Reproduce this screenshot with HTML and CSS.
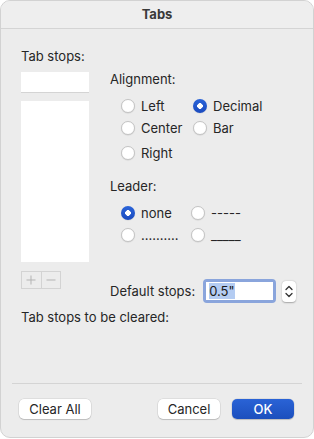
FILE: index.html
```html
<!DOCTYPE html>
<html lang="en">
  <head>
    <meta charset="UTF-8" />
    <meta name="viewport" content="width=device-width, initial-scale=1.0" />
    <title>Tabs</title>
    <link rel="stylesheet" href="styles.css">
  </head>
  <body>
    <div class="window">
      <div class="titlebar">Tabs</div>
      <div class="content">
        <div class="main">
          <div class="stops-col">
            <div class="label">Tab stops:</div>
            <div class="stop-input"></div>
            <div class="stop-list"></div>
            <div class="plus-minus">
              <span class="pm">
                <svg width="10" height="10" viewBox="0 0 10 10"><path d="M5 0.5 V9.5 M0.5 5 H9.5" stroke="#b3b3b3" stroke-width="1"/></svg>
              </span>
              <span class="pm">
                <svg width="10" height="10" viewBox="0 0 10 10"><path d="M0.5 5 H9.5" stroke="#b3b3b3" stroke-width="1"/></svg>
              </span>
            </div>
          </div>
          <div class="options-col">
            <div class="label">Alignment:</div>
            <div class="radio-grid align-grid">
              <div class="radio r1"><span class="dot"></span>Left</div>
              <div class="radio r1"><span class="dot on"></span>Decimal</div>
              <div class="radio r2"><span class="dot"></span>Center</div>
              <div class="radio r2"><span class="dot"></span>Bar</div>
              <div class="radio r3"><span class="dot"></span>Right</div>
            </div>
            <div class="label leader-label">Leader:</div>
            <div class="radio-grid leader-grid">
              <div class="radio"><span class="dot on"></span>none</div>
              <div class="radio"><span class="dot"></span>-----</div>
              <div class="radio r2"><span class="dot"></span>..........</div>
              <div class="radio r2"><span class="dot"></span>_____</div>
            </div>
            <div class="default-row">
              <span class="label">Default stops:</span>
              <div class="focus-ring">
                <div class="num-input"><span class="sel">0.5"</span></div>
              </div>
              <div class="stepper">
                <svg width="14" height="21" viewBox="0 0 14 21">
                  <path d="M4 8.5 L7 5.5 L10 8.5" fill="none" stroke="#333" stroke-width="1.3" stroke-linecap="round" stroke-linejoin="round"/>
                  <path d="M4 12.5 L7 15.5 L10 12.5" fill="none" stroke="#333" stroke-width="1.3" stroke-linecap="round" stroke-linejoin="round"/>
                </svg>
              </div>
            </div>
          </div>
        </div>
        <div class="label cleared">Tab stops to be cleared:</div>
      </div>
      <div class="footer">
        <div class="separator"></div>
        <div class="buttons">
          <button class="btn clear">Clear All</button>
          <div class="spacer"></div>
          <button class="btn cancel">Cancel</button>
          <button class="btn ok">OK</button>
        </div>
      </div>
    </div>
  </body>
</html>
```

FILE: styles.css
```css
body {
  margin: 0;
  padding: 0;
  background: #ffffff;
  font-family: "Inter", "Noto Sans", sans-serif;
  font-size: 13px;
  color: #262626;
}
.window {
  width: 314px;
  height: 438px;
  box-sizing: border-box;
  background: #ececec;
  border: 1px solid #d2d2d2;
  border-radius: 10px;
  display: flex;
  flex-direction: column;
  overflow: hidden;
}
.titlebar {
  height: 27px;
  line-height: 26px;
  text-align: center;
  font-weight: bold;
  color: #3a3a3a;
  background: #eeeeee;
  border-bottom: 1px solid #d4d4d4;
}
.content {
  padding: 19px 0 0 20px;
}
.label {
  line-height: 16px;
}
.main {
  display: flex;
}
.stops-col {
  width: 68px;
  display: flex;
  flex-direction: column;
}
.stop-input {
  margin-top: 8px;
  height: 20px;
  background: #fff;
  box-shadow: 0 0.5px 0.5px rgba(0, 0, 0, 0.1);
}
.stop-list {
  margin-top: 9px;
  height: 161px;
  background: #fff;
}
.plus-minus {
  margin-top: 9px;
  display: flex;
  width: 40px;
  height: 18px;
  border: 1px solid #d3d3d3;
  box-sizing: border-box;
}
.pm {
  flex: 1;
  display: flex;
  align-items: center;
  justify-content: center;
}
.pm + .pm {
  border-left: 1px solid #d3d3d3;
}
.options-col {
  margin-left: 21px;
  margin-top: 23px;
  display: flex;
  flex-direction: column;
}
.radio-grid {
  display: grid;
  padding-left: 11px;
}
.align-grid {
  margin-top: 10px;
  grid-template-columns: 72px auto;
}
.leader-grid {
  margin-top: 10px;
  grid-template-columns: 70px auto;
}
.leader-label {
  margin-top: 16px;
}
.radio {
  display: flex;
  align-items: center;
  height: 18px;
  line-height: 18px;
}
.r2 {
  margin-top: 4px;
}
.r3 {
  margin-top: 7px;
}
.dot {
  width: 14px;
  height: 14px;
  box-sizing: border-box;
  border-radius: 50%;
  background: #fff;
  border: 0.5px solid #c4c4c4;
  box-shadow: 0 0.5px 1px rgba(0, 0, 0, 0.12);
  margin-right: 6px;
  flex-shrink: 0;
}
.dot.on {
  border: none;
  background: radial-gradient(circle, #fff 0 2.6px, transparent 3px),
    linear-gradient(#2a64d9, #1b4bbf);
}
.default-row {
  margin-top: 35px;
  display: flex;
  align-items: center;
}
.focus-ring {
  margin-left: 8px;
  width: 73px;
  height: 24px;
  box-sizing: border-box;
  border: 3px solid #8aa5dc;
  border-radius: 4px;
  padding: 0;
}
.num-input {
  height: 100%;
  background: #fff;
  padding-left: 3px;
  line-height: 18px;
}
.sel {
  background: #b4ccf2;
  color: #1a1a1a;
}
.stepper {
  margin-left: 6px;
  width: 14px;
  height: 21px;
  background: #fff;
  border-radius: 4px;
  box-shadow: 0 0.5px 1.5px rgba(0, 0, 0, 0.3);
}
.stepper svg {
  display: block;
}
.cleared {
  margin-top: 6px;
}
.footer {
  margin-top: auto;
  padding-bottom: 18px;
}
.separator {
  margin: 0 11px;
  height: 1px;
  background: #d4d4d4;
}
.buttons {
  display: flex;
  margin-top: 15px;
  padding: 0 19px 0 18px;
  gap: 12px;
}
.spacer {
  flex: 1;
}
.btn {
  height: 20px;
  border: none;
  border-radius: 5px;
  background: #fff;
  font-family: inherit;
  font-size: 13px;
  color: #262626;
  box-shadow: 0 0 0 0.5px rgba(0, 0, 0, 0.12), 0 1px 1px rgba(0, 0, 0, 0.15);
  padding: 0;
}
.clear {
  width: 72px;
}
.cancel,
.ok {
  width: 62px;
}
.ok {
  background: linear-gradient(#2a63d6, #1c4fbd);
  color: #fff;
  font-weight: 500;
}
```
